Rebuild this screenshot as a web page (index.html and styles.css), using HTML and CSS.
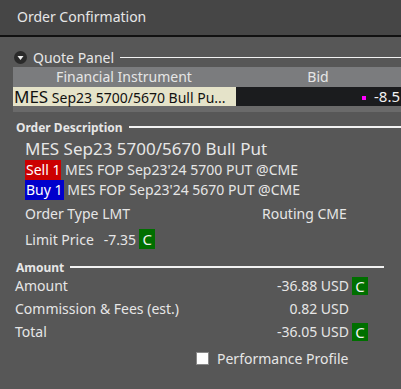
FILE: index.html
```html
<!DOCTYPE html>
<html lang="en">
<head>
  <meta charset="UTF-8">
  <title>Order Confirmation</title>
  <link rel="stylesheet" href="styles.css">
</head>
<body>
  <div class="window">
    <div class="titlebar">Order Confirmation</div>

    <div class="content">
      <div class="legend legend-quote">
        <span class="toggle">
          <svg width="13" height="13" viewBox="0 0 13 13"><circle cx="6.5" cy="6.5" r="6.5" fill="#2a2a2a"/><path d="M3.5 5 L9.5 5 L6.5 9 Z" fill="#f0f0f0"/></svg>
        </span>
        <span class="legend-text">Quote Panel</span>
        <span class="rule"></span>
      </div>

      <div class="quote">
        <div class="quote-head">
          <div class="col-inst">Financial Instrument</div>
          <div class="col-bid">Bid</div>
        </div>
        <div class="quote-row">
          <div class="col-inst cell-inst"><span class="big">MES</span> Sep23 5700/5670 Bull Pu...</div>
          <div class="col-bid cell-bid"><span class="tick"></span>-8.5</div>
        </div>
      </div>

      <div class="legend legend-bold">
        <span class="legend-text">Order Description</span>
        <span class="rule"></span>
      </div>

      <div class="desc">
        <div class="desc-title">MES Sep23 5700/5670 Bull Put</div>
        <div class="leg"><span class="side sell">Sell 1</span> MES FOP Sep23'24 5700 PUT @CME</div>
        <div class="leg"><span class="side buy">Buy 1</span> MES FOP Sep23'24 5670 PUT @CME</div>
        <div class="desc-row">
          <span class="type">Order Type LMT</span>
          <span class="routing">Routing CME</span>
        </div>
        <div class="desc-row">
          <span class="price-label">Limit Price</span>
          <span class="price">-7.35</span>
          <span class="cbadge">C</span>
        </div>
      </div>

      <div class="legend legend-bold legend-amount">
        <span class="legend-text">Amount</span>
        <span class="rule"></span>
      </div>

      <div class="amounts">
        <div class="amount-row">
          <span class="amount-label">Amount</span>
          <span class="amount-value">-36.88 USD</span>
          <span class="cbadge">C</span>
        </div>
        <div class="amount-row">
          <span class="amount-label">Commission &amp; Fees (est.)</span>
          <span class="amount-value">0.82 USD</span>
          <span class="cslot"></span>
        </div>
        <div class="amount-row">
          <span class="amount-label">Total</span>
          <span class="amount-value">-36.05 USD</span>
          <span class="cbadge">C</span>
        </div>
      </div>

      <label class="profile">
        <span class="checkbox"></span>
        Performance Profile
      </label>
    </div>
  </div>
</body>
</html>
```

FILE: styles.css
```css
html, body {
  margin: 0;
  padding: 0;
  background-color: #575757;
  color: #e6e6e6;
  font-family: 'Noto Sans', 'Open Sans', sans-serif;
}

.window {
  width: 401px;
  height: 389px;
  overflow: hidden;
}

.titlebar {
  height: 35px;
  line-height: 34px;
  padding-left: 17px;
  font-size: 14px;
  background-color: #464646;
  border-bottom: 2px solid #111;
}

.content {
  padding-top: 13px;
}

/* section headers with a line running to the right */
.legend {
  display: flex;
  align-items: center;
  height: 14px;
}

.legend-quote {
  padding-left: 14px;
  font-size: 14px;
}

.toggle {
  display: flex;
  margin-right: 6px;
}

.legend-text {
  white-space: nowrap;
}

.rule {
  flex: 1;
  height: 1px;
  margin-left: 6px;
  background-color: #f2f2f2;
}

.legend-bold {
  padding-left: 16px;
  font-size: 12px;
  font-weight: bold;
}

.legend-bold .rule {
  height: 2px;
}

.legend-amount {
  margin-top: 8px;
  padding-right: 17px;
}

/* quote table */
.quote {
  margin: 3px 0 8px 13px;
  padding-bottom: 6px;
  background-color: #6a6a6a;
}

.quote-head,
.quote-row {
  display: flex;
}

.quote-head {
  height: 20px;
  line-height: 20px;
  font-size: 14px;
  background-color: #7b7c7e;
}

.col-inst {
  width: 222px;
  text-align: center;
  white-space: nowrap;
}

.col-bid {
  flex: 1;
  text-align: center;
  white-space: nowrap;
}

.quote-row {
  height: 19px;
  line-height: 19px;
}

.cell-inst {
  text-align: left;
  padding-left: 1px;
  background-color: #e5e3c9;
  color: #111;
  font-size: 14px;
}

.big {
  font-size: 17px;
}

.cell-bid {
  text-align: right;
  padding-right: 1px;
  background-color: #1b1c1e;
  color: #f2f2f2;
  font-size: 15px;
}

.tick {
  display: inline-block;
  width: 4px;
  height: 4px;
  margin: 0 8px 2px 0;
  background-color: #ff00ff;
}

/* order description */
.desc {
  padding: 4px 0 0 25px;
}

.desc-title {
  font-size: 17px;
  line-height: 22px;
}

.leg {
  font-size: 14px;
  height: 20px;
  line-height: 20px;
  white-space: nowrap;
}

.side {
  display: inline-block;
  padding: 0 1px;
  color: #fff;
}

.sell {
  background-color: #cc0000;
}

.buy {
  background-color: #0000cc;
}

.desc-row {
  display: flex;
  align-items: center;
  font-size: 14px;
  height: 26px;
}

.type {
  width: 237px;
}

.price-label {
  margin-right: 10px;
}

.price {
  margin-right: 3px;
}

.cbadge {
  display: inline-block;
  width: 16px;
  height: 20px;
  line-height: 20px;
  text-align: center;
  font-size: 15px;
  background-color: #006f00;
  color: #f2f2f2;
}

.cslot {
  width: 16px;
}

/* amounts */
.amounts {
  padding: 0 0 0 15px;
}

.amount-row {
  display: flex;
  align-items: center;
  height: 23px;
  font-size: 14px;
  padding-right: 33px;
}

.amount-label {
  flex: 1;
}

.amount-value {
  margin-right: 3px;
}

.amounts .cbadge {
  height: 18px;
  line-height: 18px;
}

.profile {
  display: flex;
  align-items: center;
  margin: 6px 0 0 196px;
  font-size: 14px;
}

.checkbox {
  width: 11px;
  height: 11px;
  margin-right: 8px;
  background-color: #fff;
  border: 1px solid #888;
}
```
